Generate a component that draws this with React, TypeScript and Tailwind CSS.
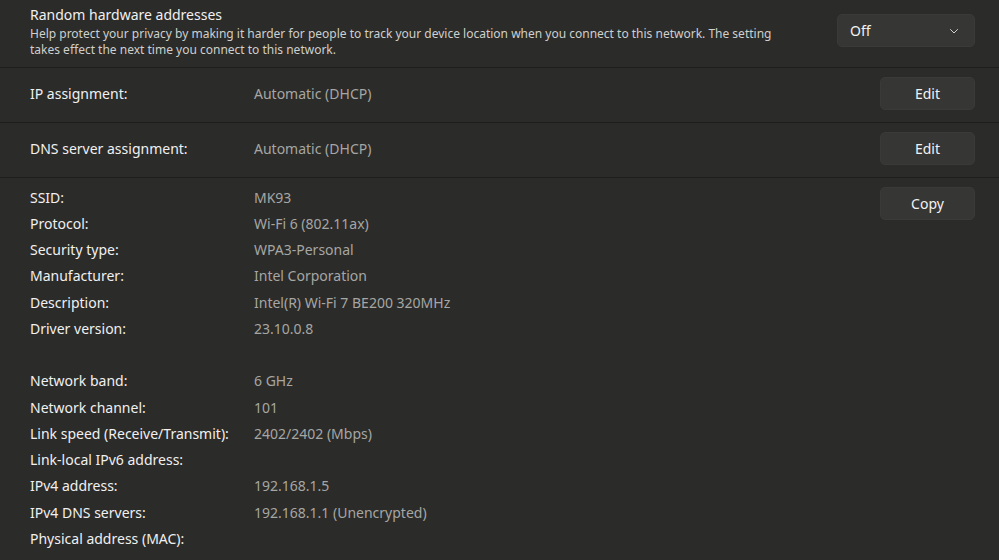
const details: [string, string][] = [
  ["SSID:", "MK93"],
  ["Protocol:", "Wi-Fi 6 (802.11ax)"],
  ["Security type:", "WPA3-Personal"],
  ["Manufacturer:", "Intel Corporation"],
  ["Description:", "Intel(R) Wi-Fi 7 BE200 320MHz"],
  ["Driver version:", "23.10.0.8"],
  ["", ""],
  ["Network band:", "6 GHz"],
  ["Network channel:", "101"],
  ["Link speed (Receive/Transmit):", "2402/2402 (Mbps)"],
  ["Link-local IPv6 address:", ""],
  ["IPv4 address:", "192.168.1.5"],
  ["IPv4 DNS servers:", "192.168.1.1 (Unencrypted)"],
  ["Physical address (MAC):", ""],
];

function Button({ label }: { label: string }) {
  return (
    <button
      type="button"
      className="h-[33px] w-[95px] rounded-[5px] border border-[#3a3a38] bg-[#363634] text-[14px] text-[#f2f2f2]"
    >
      {label}
    </button>
  );
}

function AssignRow({ label, value }: { label: string; value: string }) {
  return (
    <div className="flex h-[54px] items-center bg-[#2b2b29] pb-[3px] pl-[30px] pr-[24px]">
      <span className="w-[224px] text-[14px] text-[#f0f0f0]">{label}</span>
      <span className="flex-1 text-[14px] text-[#a6a6a4]">{value}</span>
      <Button label="Edit" />
    </div>
  );
}

export default function App() {
  return (
    <div
      className="flex h-[560px] w-[999px] flex-col gap-[1px] overflow-hidden bg-[#1e1e1c]"
      style={{ fontFamily: '"Segoe UI", "Noto Sans", sans-serif' }}
    >
      <div className="flex h-[67px] items-start bg-[#2b2b29] pl-[30px] pr-[24px] pt-[5px]">
        <div className="flex-1">
          <div className="text-[14px] leading-[20px] text-[#f0f0f0]">Random hardware addresses</div>
          <div className="mt-[1px] w-[768px] text-[12px] leading-[16px] text-[#cfcfcd]">
            Help protect your privacy by making it harder for people to track your device location when you connect to
            this network. The setting takes effect the next time you connect to this network.
          </div>
        </div>
        <div className="mt-[9px] flex h-[33px] w-[138px] items-center justify-between rounded-[5px] border border-[#3a3a38] bg-[#363634] pl-[12px] pr-[14px]">
          <span className="text-[14px] text-[#f2f2f2]">Off</span>
          <svg width="12" height="12" viewBox="0 0 12 12" fill="none">
            <path d="M2.5 4.5 6 8l3.5-3.5" stroke="#d0d0d0" strokeWidth="1" strokeLinecap="round" strokeLinejoin="round" />
          </svg>
        </div>
      </div>

      <AssignRow label="IP assignment:" value="Automatic (DHCP)" />
      <AssignRow label="DNS server assignment:" value="Automatic (DHCP)" />

      <div className="flex flex-1 bg-[#2b2b29] pl-[30px] pr-[24px] pt-[6px]">
        <div className="flex-1">
          {details.map(([k, v], i) => (
            <div key={i} className="flex h-[26.25px] items-center text-[14px]">
              <span className="w-[224px] text-[#f0f0f0]">{k}</span>
              <span className="text-[#a6a6a4]">{v}</span>
            </div>
          ))}
        </div>
        <div className="pt-[3px]">
          <Button label="Copy" />
        </div>
      </div>
    </div>
  );
}
